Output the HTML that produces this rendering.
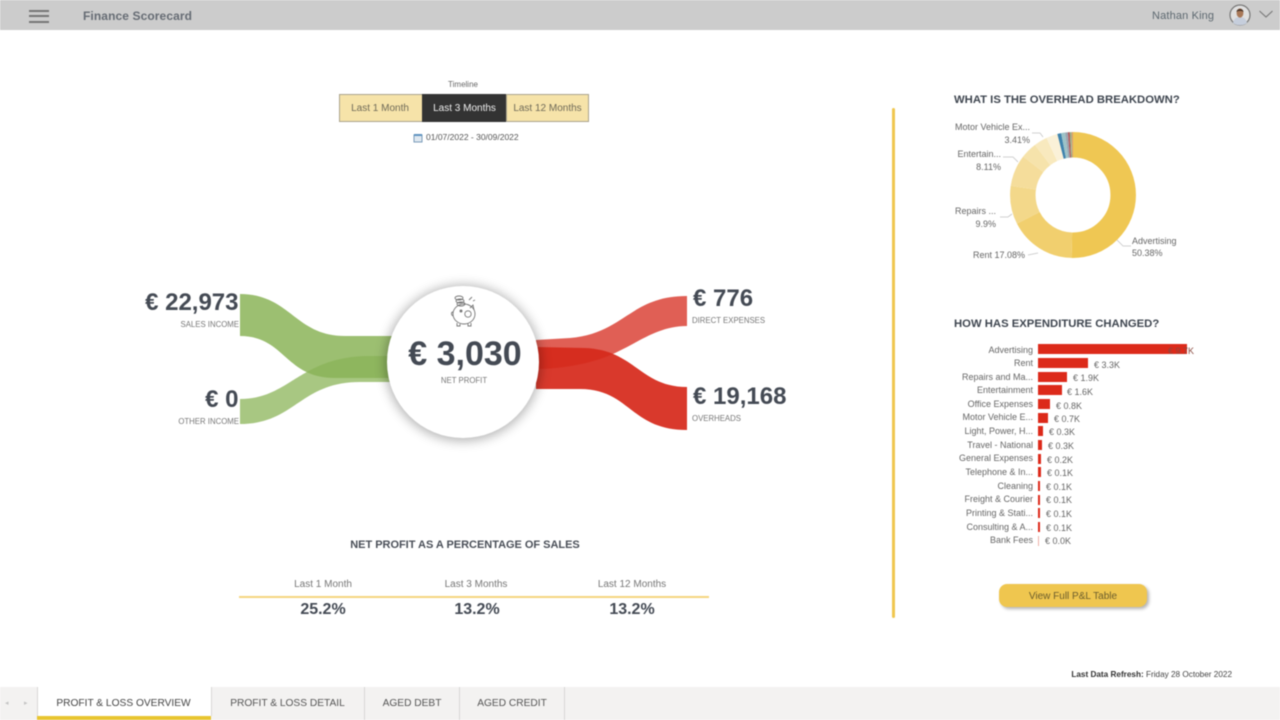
<!DOCTYPE html>
<html><head><meta charset="utf-8"><title>Finance Scorecard</title>
<style>
html,body{margin:0;padding:0;background:#fff;width:1280px;height:720px;overflow:hidden}
#w{position:relative;width:1280px;height:720px;overflow:hidden;font-family:"Liberation Sans",sans-serif;filter:blur(.4px)}
.t{position:absolute;white-space:nowrap;line-height:1}
.r{text-align:right}.c{text-align:center}
.n{font-weight:bold;color:#444a54}
.s{font-size:7.8px;color:#777}
.d{font-size:9px;color:#666}
.bl{font-size:9px;color:#666;text-align:right;left:933px;width:100px}
.bv{font-size:9px;color:#666}
.b{position:absolute;left:1038px;height:10px;background:#dc2a1a}
.h{position:absolute;background:#777;left:29px;width:20px;height:2px}
.sl{position:absolute;top:94px;height:26px;line-height:28px;text-align:center;font-size:10px;background:#f6e3a9;color:#6f6a58;border:1px solid #aaa48e}
.tab{position:absolute;top:687px;height:33px;line-height:34px;text-align:center;font-size:10.2px;color:#555;border-right:1px solid #d8d7d5}
</style></head><body><div id="w">
<div style="position:absolute;left:0;top:0;width:1280px;height:29.5px;background:#cccccc"></div>
<div class="h" style="top:10px"></div><div class="h" style="top:15px"></div><div class="h" style="top:20.5px"></div>
<div class="t" style="left:83px;top:9.5px;font-size:12px;font-weight:bold;color:#666c74;letter-spacing:.1px">Finance Scorecard</div>
<div class="t" style="left:1152px;top:11px;font-size:11px;color:#5d6870;letter-spacing:.15px">Nathan King</div>
<svg style="position:absolute;left:1228px;top:3px" width="48" height="24" viewBox="0 0 48 24">
<circle cx="12" cy="12" r="10" fill="#e0e0e0" stroke="#777" stroke-width="1.2"/>
<path d="M5 20c1-5 4-6 7-6s6 1 7 6c-4 3-10 3-14 0z" fill="#c6cedc"/>
<ellipse cx="12" cy="10" rx="3.4" ry="4.6" fill="#a87858"/>
<path d="M8.5 9c0-4 7-4 7 0-2-1.500-5-1.500-7 0z" fill="#4a3528"/>
<path d="M31.500 8l6.500 6 6.500-6" fill="none" stroke="#777" stroke-width="1.1"/>
</svg>

<div class="t c" style="left:413px;top:80.500px;width:100px;font-size:8px;color:#666">Timeline</div>
<div class="sl" style="left:339px;width:82px;text-indent:-2px">Last 1 Month</div>
<div class="sl" style="left:422px;width:83px;background:#333;color:#eee;border-color:#333">Last 3 Months</div>
<div class="sl" style="left:506px;width:81px">Last 12 Months</div>
<svg style="position:absolute;left:413px;top:133px" width="10" height="10" viewBox="0 0 10 10"><rect x="1" y="2" width="8" height="7" fill="#dfe8f0" stroke="#7a9cba"/><rect x="1" y="1" width="8" height="2" fill="#5f93c0"/></svg>
<div class="t" style="left:426px;top:133px;font-size:8.500px;color:#555">01/07/2022 - 30/09/2022</div>

<svg style="position:absolute;left:0;top:0" width="900" height="500" viewBox="0 0 900 500">
<path d="M240 294C290 294 295 336 345 336L392 336L392 378L335 378C285 378 285 336 240 336Z" fill="#8bb458" fill-opacity=".85"/>
<path d="M240 399C290 399 300 356 370 356L392 356L392 382L360 382C300 382 295 424 240 424Z" fill="#8bb458" fill-opacity=".75"/>
<path d="M536 340L570 338C625 333 630 296 687 296L687 326C650 326 630 352 590 362C575 366 555 369 536 369Z" fill="#d62a1c" fill-opacity=".75"/>
<path d="M536 347L585 348C635 350 640 387 687 387L687 430C630 430 630 389 580 389L536 389Z" fill="#d62a1c" fill-opacity=".93"/>
</svg>
<div style="position:absolute;left:387px;top:286px;width:152px;height:152px;border-radius:50%;background:#fff;box-shadow:0 1px 11px 2px rgba(0,0,0,.3)"></div>
<svg style="position:absolute;left:449px;top:293px" width="30" height="36" viewBox="0 0 30 36" fill="none" stroke="#777" stroke-width=".9">
<ellipse cx="15" cy="21" rx="11" ry="10"/>
<path d="M8 30v3h3v-2M19 30v3h3v-3"/><path d="M4 19c-2 0-2 3 0 4"/>
<path d="M21 15l3-3 1 5"/><circle cx="19" cy="21" r="3.200"/><circle cx="12" cy="18" r="1" fill="#777"/>
<ellipse cx="10" cy="5" rx="4" ry="2"/><ellipse cx="11" cy="8" rx="4" ry="2"/><ellipse cx="12" cy="11" rx="4" ry="2"/><path d="M20 7l3-3M24 8l2-1"/>
</svg>

<div class="t n r" style="left:100px;top:291px;width:138.500px;font-size:24px">€ 22,973</div>
<div class="t s r" style="left:100px;top:321px;width:139px">SALES INCOME</div>
<div class="t n r" style="left:100px;top:388px;width:138.500px;font-size:24px">€ 0</div>
<div class="t s r" style="left:100px;top:417.500px;width:139px">OTHER INCOME</div>
<div class="t n c" style="left:385px;top:337px;width:160px;font-size:34px">€ 3,030</div>
<div class="t s c" style="left:414px;top:377px;width:100px">NET PROFIT</div>
<div class="t n" style="left:693px;top:287px;font-size:24px">€ 776</div>
<div class="t s" style="left:692px;top:317px">DIRECT EXPENSES</div>
<div class="t n" style="left:693px;top:385px;font-size:24px">€ 19,168</div>
<div class="t s" style="left:692px;top:414.500px">OVERHEADS</div>

<div class="t n c" style="left:315px;top:539.500px;width:300px;font-size:11px;color:#4a4f58;letter-spacing:-.02px">NET PROFIT AS A PERCENTAGE OF SALES</div>
<div class="t c" style="left:263px;top:580px;width:120px;font-size:10px;color:#777">Last 1 Month</div>
<div class="t c" style="left:416px;top:580px;width:120px;font-size:10px;color:#777">Last 3 Months</div>
<div class="t c" style="left:572px;top:580px;width:120px;font-size:10px;color:#777">Last 12 Months</div>
<div style="position:absolute;left:239px;top:596px;width:470px;height:2px;background:#f5d67f"></div>
<div class="t n c" style="left:263px;top:602px;width:120px;font-size:16px">25.2%</div>
<div class="t n c" style="left:417px;top:602px;width:120px;font-size:16px">13.2%</div>
<div class="t n c" style="left:572px;top:602px;width:120px;font-size:16px">13.2%</div>

<div style="position:absolute;left:892px;top:108px;width:3px;height:510px;border-radius:2px;background:#f0c74f"></div>

<div class="t n" style="left:954px;top:95px;font-size:11.300px;color:#3f4650">WHAT IS THE OVERHEAD BREAKDOWN?</div>
<svg style="position:absolute;left:1000px;top:120px" width="150" height="150" viewBox="0 0 150 150">
<g transform="rotate(-90 73 75)" fill="none" stroke-width="25.500">
<circle cx="73" cy="75" r="50.200" pathLength="100" stroke="#efc753" stroke-dasharray="50.38 100"/>
<circle cx="73" cy="75" r="50.200" pathLength="100" stroke="#f1cf6e" stroke-dasharray="17.08 100" stroke-dashoffset="-50.38"/>
<circle cx="73" cy="75" r="50.200" pathLength="100" stroke="#f3d88a" stroke-dasharray="9.9 100" stroke-dashoffset="-67.46"/>
<circle cx="73" cy="75" r="50.200" pathLength="100" stroke="#f5dd9b" stroke-dasharray="8.11 100" stroke-dashoffset="-77.36"/>
<circle cx="73" cy="75" r="50.200" pathLength="100" stroke="#f6e3ab" stroke-dasharray="4.2 100" stroke-dashoffset="-85.47"/>
<circle cx="73" cy="75" r="50.200" pathLength="100" stroke="#f8e9be" stroke-dasharray="3.41 100" stroke-dashoffset="-89.67"/>
<circle cx="73" cy="75" r="50.200" pathLength="100" stroke="#faf1d8" stroke-dasharray="2.9 100" stroke-dashoffset="-93.08"/>
<circle cx="73" cy="75" r="50.200" pathLength="100" stroke="#3f83ad" stroke-dasharray="1 100" stroke-dashoffset="-95.98"/>
<circle cx="73" cy="75" r="50.200" pathLength="100" stroke="#9cc3c8" stroke-dasharray="1 100" stroke-dashoffset="-96.98"/>
<circle cx="73" cy="75" r="50.200" pathLength="100" stroke="#9aa5b0" stroke-dasharray=".7 100" stroke-dashoffset="-97.98"/>
<circle cx="73" cy="75" r="50.200" pathLength="100" stroke="#b5585c" stroke-dasharray=".5 100" stroke-dashoffset="-98.68"/>
<circle cx="73" cy="75" r="50.200" pathLength="100" stroke="#8fb58a" stroke-dasharray=".4 100" stroke-dashoffset="-99.18"/>
<circle cx="73" cy="75" r="50.200" pathLength="100" stroke="#d8a070" stroke-dasharray=".42 100" stroke-dashoffset="-99.58"/>
</g>
<g fill="none" stroke="#c4c4c4" stroke-width=".8">
<path d="M117 120l6 6h8M28 135l10-2M-2 97h10l4-3M3 37h10l5 5M32 13h8l3 4"/>
</g>
</svg>
<div class="t d r" style="left:930px;top:123px;width:100px">Motor Vehicle Ex...</div>
<div class="t d r" style="left:930px;top:136px;width:100px">3.41%</div>
<div class="t d r" style="left:901px;top:150px;width:100px">Entertain...</div>
<div class="t d r" style="left:901px;top:163px;width:100px">8.11%</div>
<div class="t d r" style="left:896px;top:207px;width:100px">Repairs ...</div>
<div class="t d r" style="left:896px;top:220px;width:100px">9.9%</div>
<div class="t d r" style="left:925px;top:251px;width:100px">Rent 17.08%</div>
<div class="t d" style="left:1132px;top:236.500px">Advertising</div>
<div class="t d" style="left:1132px;top:248.500px">50.38%</div>

<div class="t n" style="left:954px;top:319px;font-size:11.300px;color:#3f4650">HOW HAS EXPENDITURE CHANGED?</div>
<div class="t bl" style="top:346px">Advertising</div><div class="b" style="top:344px;width:149px"></div><div class="t bv" style="left:1168px;top:346.500px;color:#8a4a40">€ 9.7K</div>
<div class="t bl" style="top:359px">Rent</div><div class="b" style="top:358px;width:50px"></div><div class="t bv" style="left:1094px;top:360.500px">€ 3.3K</div>
<div class="t bl" style="top:373px">Repairs and Ma...</div><div class="b" style="top:371.500px;width:29px"></div><div class="t bv" style="left:1073px;top:373.500px">€ 1.9K</div>
<div class="t bl" style="top:386px">Entertainment</div><div class="b" style="top:385px;width:24px"></div><div class="t bv" style="left:1067px;top:387.500px">€ 1.6K</div>
<div class="t bl" style="top:400px">Office Expenses</div><div class="b" style="top:399px;width:12px"></div><div class="t bv" style="left:1056px;top:401.500px">€ 0.8K</div>
<div class="t bl" style="top:413px">Motor Vehicle E...</div><div class="b" style="top:412.500px;width:10px"></div><div class="t bv" style="left:1054px;top:414.500px">€ 0.7K</div>
<div class="t bl" style="top:427px">Light, Power, H...</div><div class="b" style="top:426px;width:5px"></div><div class="t bv" style="left:1049px;top:428px">€ 0.3K</div>
<div class="t bl" style="top:441px">Travel - National</div><div class="b" style="top:440px;width:4px"></div><div class="t bv" style="left:1048px;top:441.500px">€ 0.3K</div>
<div class="t bl" style="top:454px">General Expenses</div><div class="b" style="top:453.500px;width:3px"></div><div class="t bv" style="left:1047px;top:455.500px">€ 0.2K</div>
<div class="t bl" style="top:468px">Telephone &amp; In...</div><div class="b" style="top:467px;width:2.500px"></div><div class="t bv" style="left:1047px;top:469px">€ 0.1K</div>
<div class="t bl" style="top:482px">Cleaning</div><div class="b" style="top:481px;width:2px"></div><div class="t bv" style="left:1046px;top:482.500px">€ 0.1K</div>
<div class="t bl" style="top:495px">Freight &amp; Courier</div><div class="b" style="top:494.500px;width:2px"></div><div class="t bv" style="left:1046px;top:496px">€ 0.1K</div>
<div class="t bl" style="top:509px">Printing &amp; Stati...</div><div class="b" style="top:508px;width:2px"></div><div class="t bv" style="left:1046px;top:510px">€ 0.1K</div>
<div class="t bl" style="top:523px">Consulting &amp; A...</div><div class="b" style="top:522px;width:2px"></div><div class="t bv" style="left:1046px;top:523.500px">€ 0.1K</div>
<div class="t bl" style="top:536px">Bank Fees</div><div class="b" style="top:535.500px;width:1px;background:#efb0a8"></div><div class="t bv" style="left:1045px;top:537px">€ 0.0K</div>

<div style="position:absolute;left:999px;top:584px;width:148px;height:23px;line-height:25px;border-radius:8px;background:#efc64f;box-shadow:2px 2px 3px rgba(0,0,0,.3);text-align:center;font-size:10px;color:#6b5d2c">View Full P&amp;L Table</div>

<div class="t r" style="left:1000px;top:670.500px;width:232px;font-size:8.200px;color:#444"><b style="color:#333">Last Data Refresh:</b> Friday 28 October 2022</div>

<div style="position:absolute;left:0;top:687px;width:1280px;height:33px;background:#f3f2f1"></div>
<div class="t" style="left:5px;top:700px;font-size:7px;color:#c4c4c4">◂</div>
<div class="t" style="left:24px;top:700px;font-size:7px;color:#c4c4c4">▸</div>
<div class="tab" style="left:37px;width:173px;background:#fff;border-left:1px solid #d8d7d5;color:#444;height:29px;line-height:34px;text-indent:-2px">PROFIT &amp; LOSS OVERVIEW</div>
<div style="position:absolute;left:37px;top:716px;width:174px;height:4px;background:#e8c530"></div>
<div class="tab" style="left:211px;width:153px">PROFIT &amp; LOSS DETAIL</div>
<div class="tab" style="left:365px;width:94px">AGED DEBT</div>
<div class="tab" style="left:460px;width:104px">AGED CREDIT</div>
</div></body></html>
